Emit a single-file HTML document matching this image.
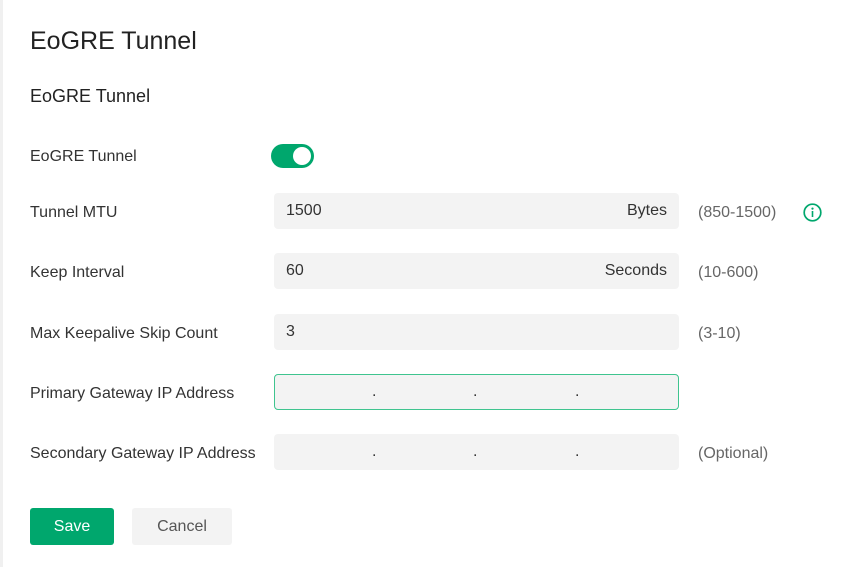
<!DOCTYPE html>
<html><head><style>
*{margin:0;padding:0;box-sizing:border-box}
body{width:865px;height:567px;background:#fff;font-family:"Liberation Sans",sans-serif;color:#333;position:relative;overflow:hidden}
.a{position:absolute;white-space:nowrap}
.lbl{font-size:16px;color:#333;left:30px}
.in{position:absolute;left:274px;width:405px;height:36px;background:#f3f3f3;border-radius:4px;font-size:16px;color:#333;line-height:36px;padding:0 12px}
.hint{font-size:16px;color:#666;left:698px}
.dot{position:absolute;top:0;font-size:16px}
</style></head><body>
<div class="a" style="left:0;top:0;width:3px;height:567px;background:#f0f0f0"></div>
<div class="a" style="left:30px;top:27px;font-size:25px;color:#222">EoGRE Tunnel</div>
<div class="a" style="left:30px;top:86px;font-size:18px;color:#222">EoGRE Tunnel</div>

<div class="a lbl" style="top:148px">EoGRE Tunnel</div>
<div class="a" style="left:271px;top:144px;width:43px;height:24px;border-radius:12px;background:#00a76d"><div style="position:absolute;right:3px;top:3px;width:18px;height:18px;border-radius:50%;background:#fff"></div></div>

<div class="a lbl" style="top:204px">Tunnel MTU</div>
<div class="in" style="top:193px">1500<span style="position:absolute;right:12px">Bytes</span></div>
<div class="a hint" style="top:204px">(850-1500)</div>
<svg class="a" style="left:803px;top:203px" width="19" height="19" viewBox="0 0 19 19"><circle cx="9.5" cy="9.5" r="8.3" fill="none" stroke="#00a76d" stroke-width="1.7"/><circle cx="9.5" cy="5.6" r="1.1" fill="#00a76d"/><rect x="8.7" y="8" width="1.6" height="6" fill="#00a76d"/></svg>

<div class="a lbl" style="top:264px">Keep Interval</div>
<div class="in" style="top:253px">60<span style="position:absolute;right:12px">Seconds</span></div>
<div class="a hint" style="top:264px">(10-600)</div>

<div class="a lbl" style="top:325px">Max Keepalive Skip Count</div>
<div class="in" style="top:314px">3</div>
<div class="a hint" style="top:325px">(3-10)</div>

<div class="a lbl" style="top:385px">Primary Gateway IP Address</div>
<div class="in" style="top:374px;border:1px solid #3fc48f;line-height:34px"><span class="dot" style="left:97px">.</span><span class="dot" style="left:198px">.</span><span class="dot" style="left:300px">.</span></div>

<div class="a lbl" style="top:445px">Secondary Gateway IP Address</div>
<div class="in" style="top:434px"><span class="dot" style="left:98px">.</span><span class="dot" style="left:199px">.</span><span class="dot" style="left:301px">.</span></div>
<div class="a hint" style="top:445px">(Optional)</div>

<div class="a" style="left:30px;top:508px;width:84px;height:37px;background:#00a76d;border-radius:3px;color:#fff;font-size:16px;line-height:37px;text-align:center">Save</div>
<div class="a" style="left:132px;top:508px;width:100px;height:37px;background:#f3f3f3;border-radius:3px;color:#555;font-size:16px;line-height:37px;text-align:center">Cancel</div>
</body></html>
